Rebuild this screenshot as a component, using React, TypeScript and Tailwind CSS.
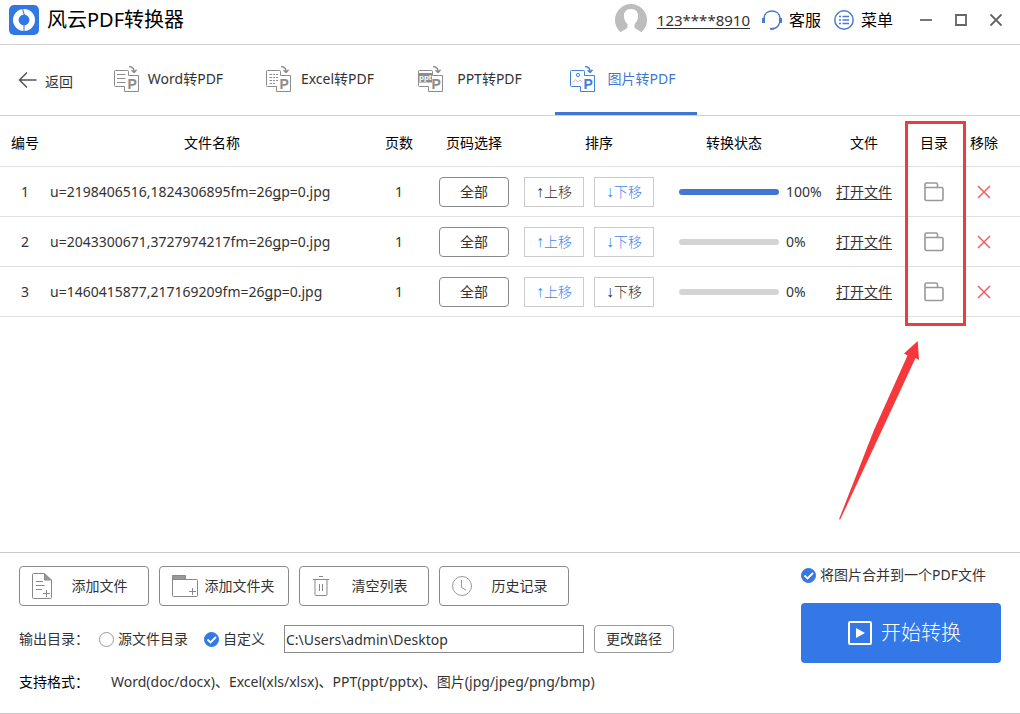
import { useState } from "react";
import type { ReactNode } from "react";

type Row = {
  id: number;
  name: [string, string, string];
  pages: number;
  progress: number;
};

const TABS = [
  { key: "word", label: "Word转PDF" },
  { key: "excel", label: "Excel转PDF" },
  { key: "ppt", label: "PPT转PDF" },
  { key: "image", label: "图片转PDF" },
];

// the middle part of a name is the underlined mnemonic letter
const ROWS: Row[] = [
  { id: 1, name: ["u=2198406516,1824306895fm=26", "g", "p=0.jpg"], pages: 1, progress: 100 },
  { id: 2, name: ["u=2043300671,3727974217fm=26", "g", "p=0.jpg"], pages: 1, progress: 0 },
  { id: 3, name: ["u=1460415877,217169209fm=26", "g", "p=0.jpg"], pages: 1, progress: 0 },
];

export default function App() {
  const [tab, setTab] = useState("image");
  const [target, setTarget] = useState("custom");
  const [path, setPath] = useState("C:\\Users\\admin\\Desktop");
  const [merge, setMerge] = useState(true);

  return (
    <div className="flex min-h-screen flex-col border-b border-[#c8c8c8] bg-white font-['Noto_Sans','Noto_Sans_CJK_SC',sans-serif] text-sm leading-5 text-[#333]">
      {/* TITLE BAR */}
      <header className="flex h-[45px] items-center border-b border-[#d0d0d0] pr-4 pb-1 pl-[9px] text-black">
        <Logo />
        <h1 className="ml-2 text-xl leading-6">风云PDF转换器</h1>
        <div className="flex-1" />
        <Avatar />
        <a href="#account" className="ml-[10px] text-[15px] text-[#333] underline underline-offset-2">
          123****8910
        </a>
        <button className="ml-3 flex items-center gap-[7px] text-base">
          <Headset />
          客服
        </button>
        <button className="ml-[13px] flex items-center gap-[7px] text-base">
          <MenuIcon />
          菜单
        </button>
        <div className="ml-[25px] flex gap-[19px]">
          <WindowButton label="最小化">
            <path d="M2 8h12" />
          </WindowButton>
          <WindowButton label="最大化">
            <path d="M3 3h10v10H3z" />
          </WindowButton>
          <WindowButton label="关闭">
            <path d="M2.500 2.500l11 11M13.500 2.500l-11 11" />
          </WindowButton>
        </div>
      </header>

      {/* TABS */}
      <nav className="flex h-[71px] border-b border-[#d0d0d0] pl-[18px]">
        <button className="flex w-[81px] items-center gap-2">
          <svg width="19" height="18" viewBox="0 0 19 18" fill="none" stroke="#555" strokeWidth="1.500">
            <path d="M9 1.500L1.500 9L9 16.500M1.500 9H18.500" />
          </svg>
          <span className="pt-[3px]">返回</span>
        </button>
        <div className="flex gap-[10px]">
          {TABS.map((t) => (
            <button
              key={t.key}
              onClick={() => setTab(t.key)}
              className={`flex w-[142px] items-center border-b-[3px] pr-[10px] pl-[15px] ${
                tab === t.key ? "border-[#4177d2] text-[#4177d2]" : "border-transparent"
              }`}
            >
              <TabIcon kind={t.key} active={tab === t.key} />
              <span className="flex-1 text-center whitespace-nowrap">{t.label}</span>
            </button>
          ))}
        </div>
      </nav>

      {/* FILE LIST */}
      <main className="relative flex-1">
        <table className="w-full table-fixed border-collapse text-center">
          <colgroup>
            <col className="w-[50px]" />
            <col />
            <col className="w-[50px]" />
            <col className="w-[100px]" />
            <col className="w-[150px]" />
            <col className="w-[150px]" />
            <col className="w-20" />
            <col className="w-[60px]" />
            <col className="w-14" />
          </colgroup>
          <thead>
            <tr className="h-[50px] border-b border-[#e0e0e0] text-black">
              <Th>编号</Th>
              <Th>文件名称</Th>
              <Th>页数</Th>
              <Th>页码选择</Th>
              <Th>排序</Th>
              <Th className="pr-[30px]">转换状态</Th>
              <Th>文件</Th>
              <Th>目录</Th>
              <Th className="pr-4">移除</Th>
            </tr>
          </thead>
          <tbody>
            {ROWS.map((row, i) => (
              <FileRow key={row.id} row={row} first={i === 0} last={i === ROWS.length - 1} />
            ))}
          </tbody>
        </table>

        {/* highlighted column */}
        <div className="pointer-events-none absolute top-[5px] right-[54px] h-[205px] w-[61px] border-[3px] border-[#f03a40]" />
        <svg
          className="pointer-events-none absolute top-[225px] right-[100px]"
          width="82"
          height="180"
          viewBox="0 0 82 180"
          fill="#f5383b"
        >
          <path d="M79.700 0L81 19L77.500 17L44 89L2.200 178.600L1 178.300L36 89L69.500 14.500L66 12.500Z" />
        </svg>
      </main>

      {/* BOTTOM PANEL */}
      <footer className="flex justify-between border-t border-[#c8c8c8] px-[19px] pt-[13px] pb-[21px]">
        <div>
          <div className="flex gap-[10px]">
            <ToolButton icon={<AddFile />} label="添加文件" />
            <ToolButton icon={<AddFolder />} label="添加文件夹" />
            <ToolButton icon={<Trash />} label="清空列表" />
            <ToolButton icon={<Clock />} label="历史记录" />
          </div>

          <div className="mt-[19px] flex h-7 items-center">
            <span className="w-20">输出目录：</span>
            <label className="flex items-center gap-1">
              <Tick type="radio" name="target" checked={target === "source"} onChange={() => setTarget("source")} />
              源文件目录
            </label>
            <label className="ml-4 flex items-center gap-1">
              <Tick type="radio" name="target" checked={target === "custom"} onChange={() => setTarget("custom")} />
              自定义
            </label>
            <input
              type="text"
              aria-label="输出目录"
              value={path}
              onChange={(e) => setPath(e.target.value)}
              className="ml-[19px] h-7 w-[300px] border border-[#8a8a8a] px-px outline-none"
            />
            <button className="ml-[10px] h-7 w-20 rounded-sm border border-[#999]">更改路径</button>
          </div>

          <div className="mt-[19px] flex">
            <span className="w-[92px] text-black">支持格式：</span>
            <span>Word(doc/docx)、Excel(xls/xlsx)、PPT(ppt/pptx)、图片(jpg/jpeg/png/bmp)</span>
          </div>
        </div>

        <div className="w-[200px]">
          <label className="flex h-[18px] items-center gap-1">
            <Tick type="checkbox" name="merge" checked={merge} onChange={() => setMerge(!merge)} />
            将图片合并到一个PDF文件
          </label>
          <button className="mt-[19px] flex h-[60px] w-full items-center justify-center gap-[9px] rounded bg-[#3478e8] pl-[7px] text-xl font-light text-white">
            <svg width="24" height="24" viewBox="0 0 24 24" fill="none">
              <rect x="1" y="1" width="22" height="22" rx="1" stroke="#fff" strokeWidth="2" />
              <path d="M8 7l9 5l-9 5z" fill="#fff" />
            </svg>
            开始转换
          </button>
        </div>
      </footer>
    </div>
  );
}

function Th({ children, className = "" }: { children: ReactNode; className?: string }) {
  return <th className={`pt-[5px] font-normal ${className}`}>{children}</th>;
}

function FileRow({ row, first, last }: { row: Row; first: boolean; last: boolean }) {
  return (
    <tr className="h-[50px] border-b border-[#e0e0e0] [&>td]:pt-[2px]">
      <td>{row.id}</td>
      <td className="truncate text-left">
        {row.name[0]}
        <u className="[text-decoration-skip-ink:none]">{row.name[1]}</u>
        {row.name[2]}
      </td>
      <td>{row.pages}</td>
      <td>
        <button className="h-[30px] w-[70px] rounded-sm border border-[#888]">全部</button>
      </td>
      <td>
        <div className="flex gap-[10px]">
          <MoveButton arrow="↑" label="上移" muted={first} />
          <MoveButton arrow="↓" label="下移" muted={last} />
        </div>
      </td>
      <td>
        <div className="flex items-center gap-[7px] pl-[5px]">
          <div className="h-[6px] w-[100px] overflow-hidden rounded-full bg-[#d4d4d4]">
            <div className="h-full bg-[#4177d2]" style={{ width: `${row.progress}%` }} />
          </div>
          {row.progress}%
        </div>
      </td>
      <td>
        <a href="#open" className="underline underline-offset-2">
          打开文件
        </a>
      </td>
      <td>
        <button aria-label="打开目录" className="block w-full">
          <svg className="mx-auto" width="20" height="20" viewBox="0 0 20 20" fill="none" stroke="#999" strokeWidth="1.600">
            <path d="M1 6V2.500Q1 1 2.500 1H12Q13.500 1 13.500 2.500V5M1 5.500H17.500Q19 5.500 19 7V17Q19 18.500 17.500 18.500H2.500Q1 18.500 1 17Z" />
          </svg>
        </button>
      </td>
      <td className="pr-4">
        <button aria-label="移除" className="block w-full">
          <svg className="mx-auto" width="14" height="14" viewBox="0 0 14 14" stroke="#f45b62" strokeWidth="1.500">
            <path d="M1 1l12 12M13 1L1 13" />
          </svg>
        </button>
      </td>
    </tr>
  );
}

function MoveButton({ arrow, label, muted }: { arrow: string; label: string; muted: boolean }) {
  return (
    <button
      className={`h-[30px] w-[60px] border border-[#ccc] font-light ${muted ? "text-[#333]" : "text-[#3f88f0]"}`}
    >
      <span className="font-['Liberation_Sans',sans-serif] text-base leading-5">{arrow}</span>
      {label}
    </button>
  );
}

function ToolButton({ icon, label }: { icon: ReactNode; label: string }) {
  return (
    <button className="flex h-10 w-[130px] items-center rounded-sm border border-[#8a8a8a] pr-[10px] pl-[11px]">
      <span className="w-[30px]">{icon}</span>
      <span className="flex-1 text-center">{label}</span>
    </button>
  );
}

type TickProps = {
  type: "radio" | "checkbox";
  name: string;
  checked: boolean;
  onChange: () => void;
};

function Tick({ type, name, checked, onChange }: TickProps) {
  return (
    <span className="relative block h-[15px] w-[15px]">
      <input
        type={type}
        name={name}
        checked={checked}
        onChange={onChange}
        className="block h-[15px] w-[15px] appearance-none rounded-full border border-[#999] checked:border-[#3478e0] checked:bg-[#3478e0]"
      />
      {checked && (
        <svg
          className="pointer-events-none absolute inset-0"
          width="15"
          height="15"
          viewBox="0 0 15 15"
          fill="none"
          stroke="#fff"
          strokeWidth="1.800"
        >
          <path d="M3.500 7.500l3 3L12 5" />
        </svg>
      )}
    </span>
  );
}

function WindowButton({ label, children }: { label: string; children: ReactNode }) {
  return (
    <button aria-label={label}>
      <svg width="16" height="16" viewBox="0 0 16 16" fill="none" stroke="#666" strokeWidth="1.800">
        {children}
      </svg>
    </button>
  );
}

function Logo() {
  return (
    <svg width="30" height="30" viewBox="0 0 30 30" fill="none">
      <rect width="30" height="30" rx="5" fill="#3278e4" />
      <circle cx="15" cy="15" r="8.200" stroke="#fff" strokeWidth="5.600" />
      <path d="M13.500 3.500l2 7M15 20v6.500" stroke="#3278e4" strokeWidth="1" />
    </svg>
  );
}

function Avatar() {
  return (
    <svg width="32" height="32" viewBox="0 0 32 32">
      <circle cx="16" cy="16" r="16" fill="#bdbdbd" />
      <path
        d="M16 5c-5 0-7.500 3.500-7 8c.3 3.500 1.800 5.500 3.500 7v3.500c-1 2-5 2.500-7.500 5.500V32h22v-3c-2.500-3-6.500-3.500-7.500-5.500V20c1.700-1.500 3.200-3.500 3.500-7c.5-4.500-2-8-7-8z"
        fill="#fff"
      />
    </svg>
  );
}

function Headset() {
  return (
    <svg width="20" height="20" viewBox="0 0 20 20" fill="none" stroke="#4a7bd0" strokeWidth="1.500">
      <path d="M2 8C2.500 3.500 6 1 10 1s7.500 2.500 8 7" />
      <path d="M1.500 8v5M18.500 8v5" strokeWidth="3" />
      <path d="M17.500 13c-1 3-3.500 5.500-7 5.800" />
      <path d="M8 18.800h4" strokeWidth="2" />
    </svg>
  );
}

function MenuIcon() {
  return (
    <svg width="20" height="20" viewBox="0 0 20 20" fill="none" stroke="#4a7bd0" strokeWidth="1.500">
      <circle cx="10" cy="10" r="9.200" />
      <path d="M5 6.500h2M8.500 6.500h6.500M5 10h2M8.500 10h6.500M5 13.500h2M8.500 13.500h6.500" />
    </svg>
  );
}

function TabIcon({ kind, active }: { kind: string; active: boolean }) {
  const color = active ? "#3f80dc" : "#8c8c8c";

  return (
    <svg width="26" height="28" viewBox="0 0 26 28" fill="none" stroke={color}>
      <path d="M14.500 10.500V6.500Q14.500 5.500 13.500 5.500H1.500Q.5 5.500 .5 6.500V20.500Q.5 21.500 1.500 21.500H10.500" />
      <path d="M14.500 10.500H24.500V26.500H10.500V21.500" />
      <path d="M15 1.500c3.500 0 5 2 5.200 5.500M17.500 5.200l2.700 2.300l2.300-2.800" strokeWidth="1.400" />
      {kind === "word" && <path d="M3 9.500h8.500M3 13.500h8.500M3 17.500h8.500" />}
      {kind === "excel" && (
        <path d="M3.500 9.500h2.500M7 9.500h2M10 9.500h2M3.500 12.500h2.500M7 12.500h2M10 12.500h2M3.500 15.500h2.500M7 15.500h2M10 15.500h2M3.500 18.500h2.500M7 18.500h2" />
      )}
      {kind === "ppt" && (
        <>
          <rect x="1" y="8" width="13" height="9.500" fill={color} stroke="none" />
          <text x="1" y="14.500" fontSize="8" fontWeight="700" fill="#fff" stroke="none" fontFamily="Liberation Sans, sans-serif">
            ppt
          </text>
        </>
      )}
      {kind === "image" && (
        <>
          <circle cx="8" cy="10" r="1.600" />
          <path d="M3 17.500l2.500-3l2.500 2.500l2-2l2.500 2.500" stroke="#c9b8dc" />
        </>
      )}
      <text
        x="13.500"
        y="23.500"
        fontSize="14"
        fontWeight="700"
        fill={color}
        stroke="none"
        fontFamily="Liberation Sans, sans-serif"
      >
        P
      </text>
    </svg>
  );
}

function AddFile() {
  return (
    <svg width="22" height="28" viewBox="0 0 22 28" fill="none" stroke="#888">
      <path d="M13.500 1.500H2.500Q1.500 1.500 1.500 2.500V25.500Q1.500 26.500 2.500 26.500H19.500Q20.500 26.500 20.500 25.500V8" />
      <path d="M13.500 1.500v6.500h7z" fill="#999" />
      <path d="M5 9.500h7M5 13.500h8.500M5 17.500h6M12 21.500h7M15.500 18v7" />
    </svg>
  );
}

function AddFolder() {
  return (
    <svg width="28" height="24" viewBox="0 0 28 24" fill="none" stroke="#888">
      <path d="M1.500 5.500H25.500Q26.500 5.500 26.500 6.500V21.500Q26.500 22.500 25.500 22.500H2.500Q1.500 22.500 1.500 21.500Z" />
      <path d="M1.500 1.500h13v4h-13z" fill="#999" />
      <path d="M18 17.500h7M21.500 14v7" />
    </svg>
  );
}

function Trash() {
  return (
    <svg width="20" height="22" viewBox="0 0 20 22" fill="none" stroke="#888">
      <path d="M2 4.500h16M8 1.500h4M4 4.500v15Q4 20.500 5 20.500H15Q16 20.500 16 19.500v-15M8.500 9v7M11.500 9v7" />
    </svg>
  );
}

function Clock() {
  return (
    <svg width="22" height="22" viewBox="0 0 22 22" fill="none" stroke="#999">
      <circle cx="11" cy="11" r="9.500" />
      <path d="M10.500 5v7.500l4.500 2.500" />
    </svg>
  );
}
